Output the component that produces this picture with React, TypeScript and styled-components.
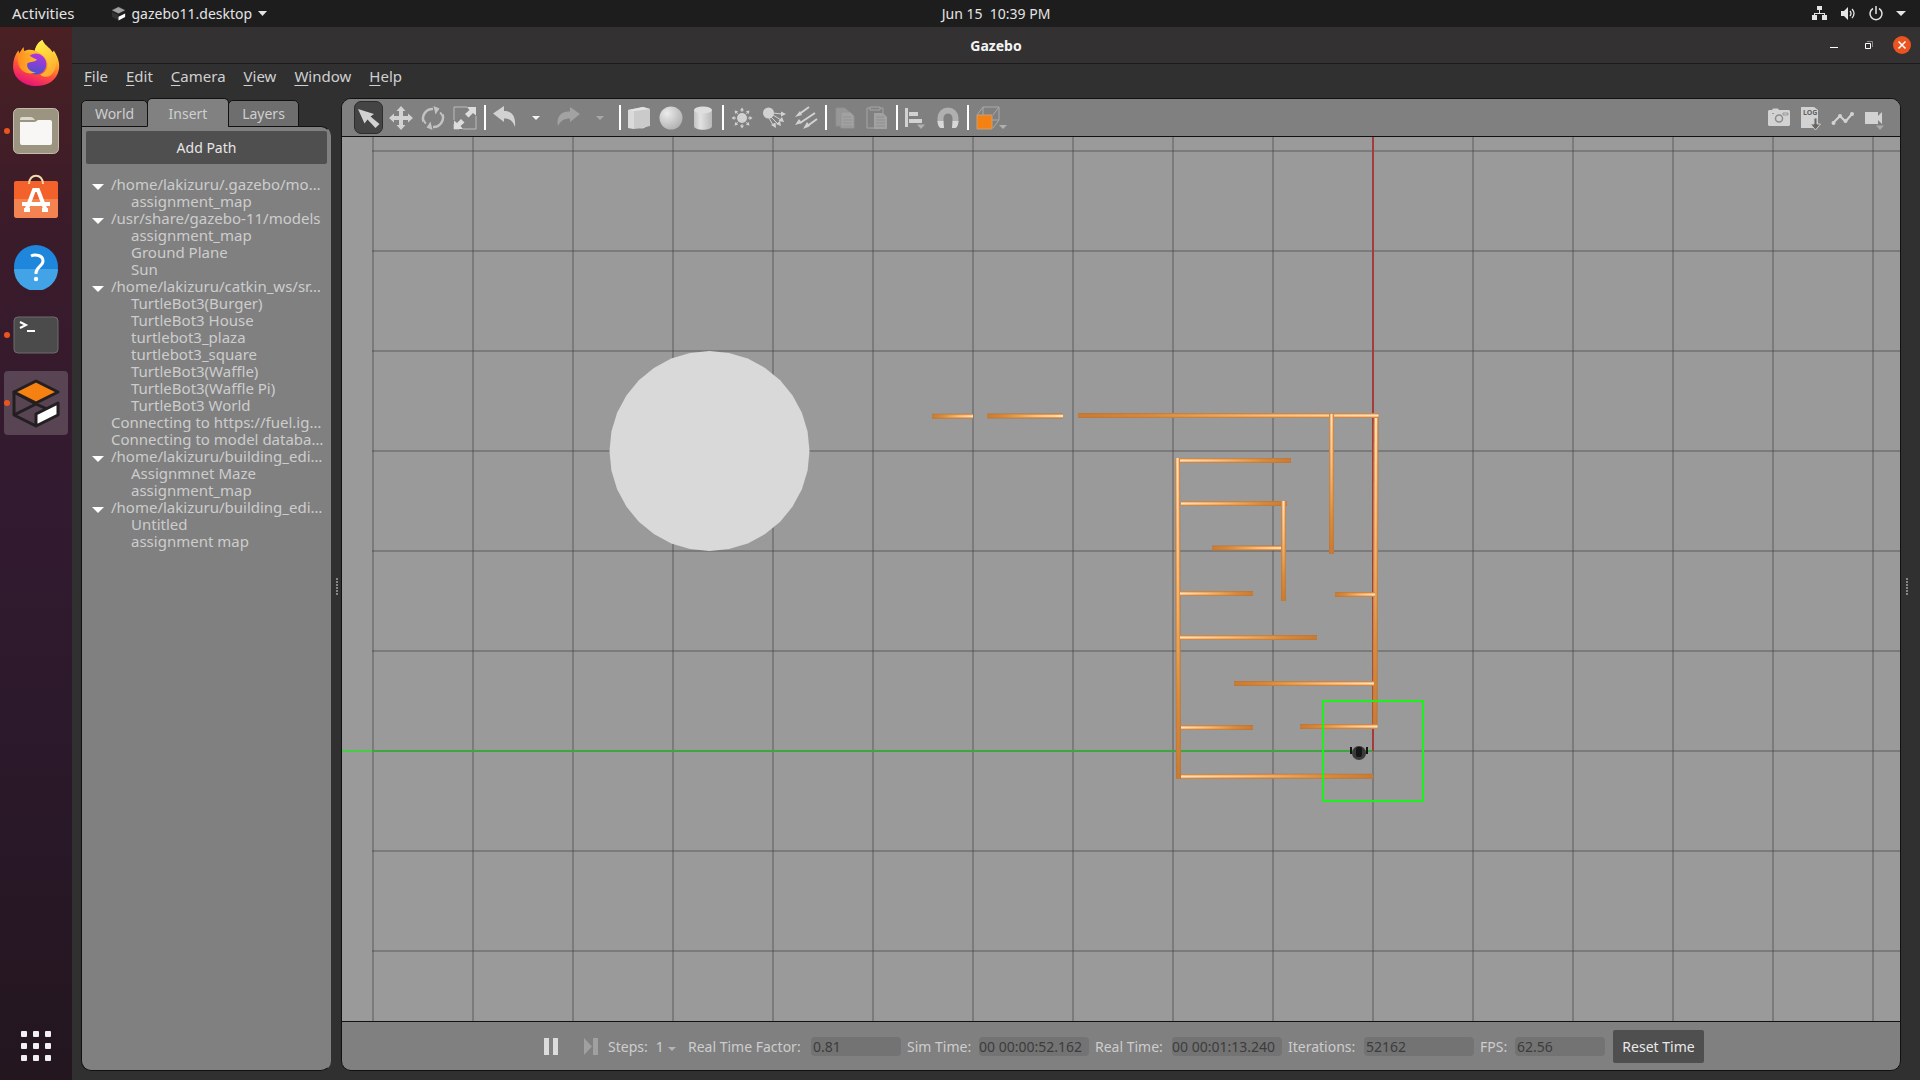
import React from "react";
import styled, { createGlobalStyle, css } from "styled-components";

const GlobalStyle = createGlobalStyle`
  *, *::before, *::after { box-sizing: border-box; }
  body { margin: 0; background: #303030; }
  body, button, input {
    font-family: "Noto Sans", "Open Sans", sans-serif;
    font-size: 14px;
    line-height: 17px;
  }
  button { border: 0; padding: 0; background: none; color: inherit; }
  ul { list-style: none; margin: 0; padding: 0; }
  svg { display: block; }
`;

/* ---------- shell ---------- */

const Desktop = styled.div`
  display: grid;
  grid-template: 27px minmax(0, 1fr) / 72px minmax(0, 1fr);
  height: 100vh;
  overflow: hidden;
`;

const TopBar = styled.header`
  grid-column: 1 / -1;
  display: grid;
  grid-template-columns: 1fr auto 1fr;
  align-items: center;
  padding: 0 14px 0 12px;
  background: #1d1d1d;
  color: #e4e4e4;
`;

const TopGroup = styled.div<{ $end?: boolean }>`
  display: flex;
  align-items: center;
  gap: ${(p) => (p.$end ? 12 : 36)}px;
  justify-content: ${(p) => (p.$end ? "flex-end" : "flex-start")};
`;

const TopButton = styled.button`
  display: flex;
  align-items: center;
  gap: 6px;
`;

const ActivitiesButton = styled(TopButton)`
  font-size: 15px;
`;

const Clock = styled.time`
  padding-left: 74px;
  white-space: pre;
`;

const Dock = styled.nav`
  display: flex;
  flex-direction: column;
  align-items: center;
  gap: 4px;
  padding: 4px 0 2px;
  background: linear-gradient(#4a2023, #3a1b2a 20%, #321a30 45%, #2a1829 72%, #23161f);
`;

const DockItem = styled.button<{ $active?: boolean; $last?: boolean }>`
  display: grid;
  place-items: center;
  flex: none;
  width: 64px;
  height: 64px;
  border-radius: 4px;
  position: relative;
  background: ${(p) => (p.$active ? "#584453" : "transparent")};
  ${(p) => p.$last && css`margin-top: auto;`}
`;

const RunningDot = styled.span`
  position: absolute;
  left: 0;
  top: 29px;
  width: 6px;
  height: 6px;
  border-radius: 50%;
  background: #e95420;
`;

const AppWindow = styled.div`
  display: flex;
  flex-direction: column;
  min-width: 0;
  min-height: 0;
  background: #303030;
`;

const TitleBar = styled.div`
  display: grid;
  grid-template-columns: 1fr auto 1fr;
  align-items: center;
  height: 37px;
  padding: 0 9px;
  border-bottom: 1px solid #1c1c1c;
  background: #343132;
`;

const Title = styled.h1`
  grid-column: 2;
  margin: 0;
  color: #f4f4f4;
  font-size: 14px;
  font-weight: 700;
`;

const WindowButtons = styled.div`
  display: flex;
  justify-content: flex-end;
  gap: 16px;
`;

const WindowButton = styled.button<{ $close?: boolean }>`
  display: grid;
  place-items: center;
  width: 18px;
  height: 18px;
  border-radius: 50%;
  color: #fff;
  background: ${(p) => (p.$close ? "#e95420" : "transparent")};
`;

const MenuBar = styled.nav`
  display: flex;
  gap: 18px;
  padding: 3px 12px 0;
  height: 34px;
  color: #d0d0d0;
`;

const MenuItem = styled.button`
  height: 18px;
  font-size: 15px;
  &::first-letter {
    text-decoration: underline;
    text-underline-offset: 3px;
  }
`;

const Body = styled.div`
  display: flex;
  flex: 1;
  min-height: 0;
  padding: 0 0 9px 9px;
`;

/* ---------- side panel ---------- */

const Side = styled.aside`
  display: flex;
  flex-direction: column;
  width: 250px;
  flex: none;
`;

const Tabs = styled.div`
  display: flex;
  align-items: flex-end;
  height: 29px;
  margin-bottom: -1px;
  z-index: 1;
`;

const Tab = styled.button<{ $width: number; $selected?: boolean }>`
  width: ${(p) => p.$width}px;
  height: ${(p) => (p.$selected ? 29 : 27)}px;
  padding-top: ${(p) => (p.$selected ? 2 : 0)}px;
  border: 1px solid #111;
  border-bottom-color: ${(p) => (p.$selected ? "#818181" : "#111")};
  border-radius: 5px 5px 0 0;
  background: ${(p) => (p.$selected ? "#818181" : "#6e6e6e")};
  color: #cfcfcf;
  & + & { margin-left: -1px; }
`;

const SidePanel = styled.div`
  flex: 1;
  min-height: 0;
  padding: 4px 3px 0 4px;
  border: 1px solid #111;
  border-right-color: #808080;
  border-radius: 0 10px 10px 10px;
  background: #808080;
`;

const AddPath = styled.button`
  width: 100%;
  height: 33px;
  border-radius: 2px;
  background: #4f4f4f;
  color: #e6e6e6;
`;

const Tree = styled.ul`
  padding: 12px 0 0 6px;
  color: #cdcdcd;
  font-size: 15px;
`;

const Branch = styled.li``;

const Row = styled.div`
  display: flex;
  align-items: center;
  gap: 7px;
  height: 17px;
  white-space: nowrap;
`;

const Leaves = styled.ul`
  padding-left: 39px;
`;

const Leaf = styled.li`
  height: 17px;
`;

const Toggle = styled.button`
  width: 12px;
  height: 17px;
  padding-top: 4px;
  display: grid;
  place-items: center;
`;

const Spacer = styled.span`
  width: 12px;
`;

const Splitter = styled.div<{ $width: number }>`
  display: flex;
  flex-direction: column;
  align-items: center;
  justify-content: center;
  gap: 1px;
  width: ${(p) => p.$width}px;
  padding: ${(p) => (p.$width > 12 ? "4px 7px 0 0" : "4px 0 0 2px")};
`;

const Grip = styled.i`
  width: 2px;
  height: 2px;
  background: #858585;
`;

/* ---------- scene ---------- */

const Scene = styled.main`
  display: flex;
  flex-direction: column;
  flex: 1;
  min-width: 0;
  border: 1px solid #111;
  border-radius: 10px;
  overflow: hidden;
  background: #808080;
`;

const ToolBar = styled.div`
  display: flex;
  align-items: center;
  height: 38px;
  flex: none;
  padding: 0 9px 0 11px;
  border-bottom: 1px solid #111;
  background: #808080;
`;

const Tool = styled.button<{ $selected?: boolean; $faded?: boolean; $wide?: boolean }>`
  display: grid;
  place-items: center;
  width: ${(p) => (p.$wide ? 42 : 32)}px;
  height: 34px;
  flex: none;
  color: ${(p) => (p.$faded ? "#a2a2a2" : "#d2d2d2")};
  ${(p) =>
    p.$selected &&
    css`
      width: 29px;
      height: 33px;
      margin: 0 2px 0 1px;
      border: 1px solid #2d2d2d;
      border-radius: 7px;
      background: #444;
    `}
`;

const Divider = styled.span`
  width: 2px;
  height: 25px;
  margin: 0 2px 0 3px;
  background: #fff;
`;

const Stretch = styled.span`
  flex: 1;
`;

const View = styled.div`
  flex: 1;
  min-height: 0;
  background: #9a9a9a;
`;

const Canvas = styled.svg`
  width: 100%;
  height: 100%;
`;

const StatusBar = styled.div`
  display: flex;
  align-items: center;
  justify-content: center;
  gap: 6px;
  height: 49px;
  flex: none;
  border-top: 1px solid #111;
  color: #cdcdcd;
`;

const PlayButton = styled.button<{ $faded?: boolean }>`
  width: ${(p) => (p.$faded ? 32 : 26)}px;
  height: 24px;
  display: flex;
  align-items: center;
  justify-content: ${(p) => (p.$faded ? "flex-end" : "center")};
  padding-right: ${(p) => (p.$faded ? 4 : 0)}px;
  color: ${(p) => (p.$faded ? "#a0a0a0" : "#dcdcdc")};
`;

const StepsButton = styled.button`
  display: flex;
  align-items: center;
  gap: 8px;
  width: 74px;
  svg { margin: 6px 0 0 -4px; }
`;

const Field = styled.label<{ $label: number }>`
  display: grid;
  grid-template-columns: ${(p) => p.$label}px auto;
  align-items: center;
  white-space: nowrap;
`;

const Value = styled.input<{ $wide?: boolean; $flush?: boolean }>`
  width: ${(p) => (p.$wide ? 110 : 90)}px;
  height: 19px;
  border: 0;
  border-radius: 4px;
  padding: 0 ${(p) => (p.$flush ? 0 : 2)}px;
  background: #737373;
  color: #3c3c3c;
`;

const ResetButton = styled.button`
  width: 91px;
  height: 33px;
  margin-left: 2px;
  border-radius: 2px;
  background: #4f4f4f;
  color: #e9e9e9;
`;

/* ---------- icons ---------- */

const Caret = ({ w = 9, h = 5, fill = "currentColor" }) => (
  <svg width={w} height={h} viewBox="0 0 10 5" preserveAspectRatio="none" aria-hidden="true">
    <path d="M0 0h10L5 5z" fill={fill} />
  </svg>
);

const Glyph = ({ children, size = 24 }: { children: React.ReactNode; size?: number }) => (
  <svg width={size} height={size} viewBox={`0 0 ${size} ${size}`} fill="none" aria-hidden="true">
    {children}
  </svg>
);

const c = "currentColor";

const icons = {
  select: <path d="M1 3l16 5-3.500 2.500 9 7.500-4 4-8-8.500-3 4z" fill={c} />,
  move: (
    <path
      d="M12 0l4.500 5H14v5h5V7.500l5 4.500-5 4.500V14h-5v5h2.500L12 24l-4.500-5H10v-5H5v2.500L0 12l5-4.500V10h5V5H7.500z"
      fill={c}
    />
  ),
  rotate: (
    <>
      <path d="M2.500 15.500A9.500 9.500 0 0 1 12 3" stroke="#c0c4c0" strokeWidth="2.500" />
      <path d="M21.500 8.500A9.500 9.500 0 0 1 12 21" stroke="#c0c4c0" strokeWidth="2.500" />
      <path d="M19 6.500q1.500 1 2 3M5 17.500q-1.500-1-2-3" stroke="#c0c4c0" strokeWidth="2" />
      <path d="M12.500 0l6 2.500-4 6zM11.500 24l-6-2.500 4-6z" fill="#c0c4c0" />
    </>
  ),
  scale: (
    <>
      <path d="M1 14V1h13M23 10v13H10M1 18v5h5" stroke="#bcbcbc" />
      <path d="M23 1v8.500l-3-2.500-4.500 4.500-3.500-3.500L16.500 4 14 1zM1 23v-8.500l3 2.500 4-4 3.500 3.500L7.500 20l2.500 3z" fill="#dcdedc" />
    </>
  ),
  undo: <path d="M1 7.500L12 0v5c8 0 12 5 11 16-2-6-5-8.500-11-8.500V16z" fill={c} />,
  redo: <path d="M24 8L14 1v4.500C5 5 0 11 2 20c2-5 6-7.500 12-7.500V16z" fill={c} />,
  box: (
    <>
      <path d="M1 4l15-3 7 2v16l-7 3.500L1 22z" fill="#d2d2d2" />
      <path d="M1 4l6 1v18l-6-1z" fill="#dadada" />
      <path d="M7 5l16-2v17L7 23z" fill="#cacaca" />
      <path d="M1 4l15-3 7 2L7 5z" fill="#e4e4e4" />
    </>
  ),
  sphere: (
    <>
      <defs>
        <radialGradient id="ball" cx=".33" cy=".3" r=".75">
          <stop stopColor="#ececec" />
          <stop offset=".5" stopColor="#cecece" />
          <stop offset="1" stopColor="#b2b2b2" />
        </radialGradient>
      </defs>
      <circle cx="12" cy="12" r="11.500" fill="url(#ball)" />
    </>
  ),
  cylinder: (
    <>
      <defs>
        <linearGradient id="tube">
          <stop stopColor="#c2c2c2" />
          <stop offset=".35" stopColor="#e2e2e2" />
          <stop offset="1" stopColor="#b8b8b8" />
        </linearGradient>
      </defs>
      <path d="M3 4v16c0 5 18 5 18 0V4z" fill="url(#tube)" />
      <ellipse cx="12" cy="4" rx="9" ry="3.500" fill="#dedede" />
    </>
  ),
  point: (
    <>
      <circle cx="12" cy="12" r="5" fill={c} />
      {[0, 45, 90, 135, 180, 225, 270, 315].map((a) => (
        <g key={a} transform={`rotate(${a} 12 12)`}>
          <path d="M12 1.500l2 3h-4z" fill={c} />
          <path d="M12 4v2" stroke={c} />
        </g>
      ))}
    </>
  ),
  spot: (
    <>
      <circle cx="6.500" cy="7" r="5.500" fill={c} />
      <path d="M11 7l9 1M11 9l8 5M9 11l7 7M7 12l4 7" stroke={c} />
      <path d="M19 5.500l5 2.500-5 2.500zM20 11l2 5-5.500-1zM18 15l1 5-5-2zM9 19l4.500-2.500.5 5.500z" fill={c} />
    </>
  ),
  directional: (
    <>
      <path d="M15 1L4 9M21 7L6 17M23 13l-11 8" stroke={c} strokeWidth="2" />
      <path d="M6 5l2 4-7 2zM5 13l3 4-7 2zM13 16l3 4-7 3z" fill={c} />
    </>
  ),
  copy: (
    <>
      <path d="M3 2h9l4 4v14H3z" fill="#979797" stroke="#8f8f8f" />
      <path d="M8 6h9l4 4v12H8z" fill="#a2a2a2" stroke="#929292" />
      <path d="M10 11h8M10 14h9M10 17h9M10 20h9" stroke="#929292" />
    </>
  ),
  paste: (
    <>
      <path d="M5 2H2v20h7M15 2h3v5" stroke="#a5a5a5" />
      <path d="M5 1h10v3H5z" stroke="#a5a5a5" />
      <path d="M9 7h9l4 4v12H9z" fill="#a2a2a2" />
      <path d="M11 11h8M11 14h9M11 17h9M11 20h9" stroke="#8f8f8f" />
    </>
  ),
  align: (
    <>
      <path d="M1 2h3v19H1zM5 6h9v4H5zM5 13h13v4H5z" fill={c} />
      <path d="M13 18.500h8L17 23z" fill="#b0b0b0" />
    </>
  ),
  magnet: (
    <>
      <path d="M4.500 16v-4a7.500 7.500 0 0 1 15 0v4" stroke="#b0b0b0" strokeWidth="6" />
      <path d="M1.500 15h6l.5 7H4.500c-2-1-3-4-3-7zM22.500 15h-6l-.5 7h3.500c2-1 3-4 3-7z" fill="#d8d8d8" />
    </>
  ),
  camera: (
    <>
      <path d="M2 4h3l1-1.500h5L12 4h10l1 1v14l-1 1H2l-1-1V5z" fill={c} />
      <circle cx="12" cy="12.500" r="3.500" stroke="#8c8c8c" strokeWidth="1.500" />
      <path d="M16 7h5v2h-5zM5 7.500h2" stroke="#999" />
    </>
  ),
  log: (
    <>
      <path d="M2 1h13l4 3v18H2z" fill={c} />
      <text x="4" y="9" fontSize="7" fontWeight="700" fontFamily="Noto Sans, sans-serif" fill="#626262">LOG</text>
      <path d="M15 12h3v6h3.500L16.500 24l-5-6H15z" fill="#666" stroke="#ccc" />
    </>
  ),
  plot: (
    <>
      <path d="M2 17l7-7 5.500 5.500L21 8" stroke={c} strokeWidth="2" />
      <circle cx="2.500" cy="17" r="2" fill={c} />
      <circle cx="9" cy="10" r="2" fill={c} />
      <circle cx="14.500" cy="15" r="2" fill={c} />
      <circle cx="21" cy="8" r="2" fill={c} />
    </>
  ),
  video: (
    <>
      <path d="M2 6h13v12H2zM15 10l4-4v12l-4-4z" fill={c} />
      <path d="M13 19.500h8L17 24z" fill="#aaa" />
    </>
  ),
};

const ViewAngleIcon = () => (
  <svg width="32" height="24" viewBox="0 0 32 24" fill="none" aria-hidden="true">
    <path d="M1 9l6-8h16v13l-6 8M7 1v13h16M7 14l-6 8M17 9l6-8" stroke="#a9a9a9" />
    <path d="M1 9h15v14H1z" fill="#f58113" stroke="#c9a074" />
    <path d="M23 19h8l-4 4z" fill="#b0b0b0" />
  </svg>
);

const Firefox = () => (
  <svg width="48" height="46" viewBox="0 1 46 44" aria-hidden="true">
    <defs>
      <linearGradient id="ffBody" x1=".75" y1="0" x2=".35" y2="1">
        <stop stopColor="#fff44f" />
        <stop offset=".35" stopColor="#ffb52a" />
        <stop offset=".65" stopColor="#ff5538" />
        <stop offset="1" stopColor="#e8107c" />
      </linearGradient>
      <linearGradient id="ffGlobe" x1=".6" y1="0" x2=".4" y2="1">
        <stop stopColor="#b833e1" />
        <stop offset="1" stopColor="#4a52c8" />
      </linearGradient>
      <linearGradient id="ffHead">
        <stop stopColor="#ff8a1c" />
        <stop offset="1" stopColor="#ffbd2e" />
      </linearGradient>
      <linearGradient id="ffTail" x1=".3" y1="0" x2=".7" y2="1">
        <stop stopColor="#fff04a" />
        <stop offset="1" stopColor="#ffa62c" />
      </linearGradient>
    </defs>
    <path d="M29 1c2 5 7 7 10 12l1-2c4 6 6 12 5 18-2 11-11 16-22 16S1 38 1 26c0-6 2-11 5-15l1 3 4-6v4c3-2 7-2 11-1 1-4 3-8 7-10z" fill="url(#ffBody)" />
    <circle cx="23" cy="24" r="10" fill="url(#ffGlobe)" />
    <path d="M29 1c2 5 7 7 10 12 5 8 4 16-1 21-3 3-8 3-11 0 7-2 9-10 5-16-2-3-6-5-10-7 1-4 3-8 7-10z" fill="url(#ffTail)" />
    <path d="M6 11l1 3 4-6 1 6c4 1 7 4 12 6-2 2-6 2-9 3-2 4 2 9 8 9-8 3-15-1-17-8-1-5-1-9 0-13z" fill="url(#ffHead)" />
  </svg>
);

const Files = () => (
  <svg width="46" height="46" viewBox="0 0 46 46" aria-hidden="true">
    <rect x=".5" y=".5" width="45" height="45" rx="5" fill="#9b9480" stroke="#c3bdab" />
    <path d="M7 12V11q0-2 2-2h9q2 0 4 3z" fill="#dcd8cc" />
    <path d="M7 14h14q2 0 4-2h12q2 0 2 2v21q0 2-2 2H9q-2 0-2-2z" fill="#f8f7f5" />
  </svg>
);

const Software = () => (
  <svg width="46" height="50" viewBox="0 0 46 50" aria-hidden="true">
    <path d="M1 9q0-2 2-2h40q2 0 2 2v32q0 3-3 3H4q-3 0-3-3z" fill="#f2622a" />
    <path d="M1 25h44v16q0 3-3 3H4q-3 0-3-3z" fill="#f38350" />
    <path d="M16 10C16-1 30-1 30 10" fill="none" stroke="#f5d9a8" strokeWidth="2" />
    <path d="M11 36h6M29 36h6M13 37l8-21h4l8 21" fill="none" stroke="#fff" strokeWidth="4" />
    <path d="M9 28h28v4H9z" fill="#fff" />
  </svg>
);

const Help = () => (
  <svg width="46" height="46" viewBox="0 0 46 46" aria-hidden="true">
    <circle cx="23" cy="23" r="22" fill="#1e87dc" />
    <path d="M1 25h44a22 22 0 0 1-44 0z" fill="#42a3e6" />
    <path d="M18 12c4-2 12-1 12 5 0 5-7 6-7 12v1" fill="none" stroke="#fff" strokeWidth="3" />
    <circle cx="23" cy="35" r="2.200" fill="#fff" />
  </svg>
);

const Terminal = () => (
  <svg width="46" height="38" viewBox="0 0 46 38" aria-hidden="true">
    <rect x="1" y="1" width="44" height="36" rx="4" fill="#4b4b4b" stroke="#6d6d6d" />
    <path d="M7 6l6 3-6 3M14 15h8" fill="none" stroke="#fff" strokeWidth="2" />
  </svg>
);

const Gazebo = ({ size = 50, mono = false }) => (
  <svg width={size} height={size} viewBox="0 0 50 50" aria-hidden="true">
    {!mono && <path d="M25 26L3 14v23l22 11M25 26L3 37M25 26l22 10" fill="none" stroke="#231f20" strokeWidth="3" strokeLinejoin="round" />}
    <path d="M25 3l22 11-22 11L3 14z" fill={mono ? "#a0a0a0" : "#f58113"} stroke={mono ? "#666" : "#231f20"} strokeWidth={mono ? 1 : 3} strokeLinejoin="round" />
    {mono && <path d="M3 19l21 11v17L3 36z" fill="#333" />}
    <path d="M25 36l22-11v12L25 48z" fill="#fff" stroke={mono ? "none" : "#231f20"} strokeWidth="3" strokeLinejoin="round" />
  </svg>
);

const AppGrid = () => (
  <svg width="30" height="30" viewBox="0 0 30 30" fill="#f2f0f2" aria-hidden="true">
    {[0, 12, 24].map((y) => [0, 12, 24].map((x) => <rect key={`${x}-${y}`} x={x} y={y} width="6" height="6" rx="1" />))}
  </svg>
);

/* ---------- data ---------- */

const dock = [
  { name: "Firefox", icon: <Firefox /> },
  { name: "Files", icon: <Files />, running: true },
  { name: "Software", icon: <Software /> },
  { name: "Help", icon: <Help /> },
  { name: "Terminal", icon: <Terminal />, running: true },
  { name: "Gazebo", icon: <Gazebo />, running: true, active: true },
];

const tree: { label: string; items?: string[] }[] = [
  { label: "/home/lakizuru/.gazebo/mo…", items: ["assignment_map"] },
  { label: "/usr/share/gazebo-11/models", items: ["assignment_map", "Ground Plane", "Sun"] },
  {
    label: "/home/lakizuru/catkin_ws/sr…",
    items: [
      "TurtleBot3(Burger)",
      "TurtleBot3 House",
      "turtlebot3_plaza",
      "turtlebot3_square",
      "TurtleBot3(Waffle)",
      "TurtleBot3(Waffle Pi)",
      "TurtleBot3 World",
    ],
  },
  { label: "Connecting to https://fuel.ig…" },
  { label: "Connecting to model databa…" },
  { label: "/home/lakizuru/building_edi…", items: ["Assignmnet Maze", "assignment_map"] },
  { label: "/home/lakizuru/building_edi…", items: ["Untitled", "assignment map"] },
];

type ToolDef = { name: string; icon?: React.ReactNode; selected?: boolean; faded?: boolean };

const toolGroups: ToolDef[][] = [
  [
    { name: "Select", icon: icons.select, selected: true },
    { name: "Translate", icon: icons.move },
    { name: "Rotate", icon: icons.rotate },
    { name: "Scale", icon: icons.scale },
  ],
  [
    { name: "Undo", icon: icons.undo },
    { name: "Undo history" },
    { name: "Redo", icon: icons.redo, faded: true },
    { name: "Redo history", faded: true },
  ],
  [
    { name: "Box", icon: icons.box },
    { name: "Sphere", icon: icons.sphere },
    { name: "Cylinder", icon: icons.cylinder },
  ],
  [
    { name: "Point light", icon: icons.point },
    { name: "Spot light", icon: icons.spot },
    { name: "Directional light", icon: icons.directional },
  ],
  [
    { name: "Copy", icon: icons.copy },
    { name: "Paste", icon: icons.paste },
  ],
  [
    { name: "Align", icon: icons.align },
    { name: "Snap", icon: icons.magnet },
  ],
];

const captureTools: ToolDef[] = [
  { name: "Screenshot", icon: icons.camera },
  { name: "Log", icon: icons.log },
  { name: "Plot", icon: icons.plot },
  { name: "Record video", icon: icons.video },
];

/* Walls run from their lit end to their shaded end, in scene coordinates. */
const walls: [number, number, number, number][] = [
  [1177.5, 458, 1178.5, 779],
  [1376, 413.5, 1375, 728],
  [973, 416.3, 932, 416.3],
  [1063, 416, 987, 416],
  [1378.5, 415.5, 1078, 415.5],
  [1331.5, 414, 1331.5, 554],
  [1180, 460.5, 1291, 460.5],
  [1181, 503.5, 1287, 503.5],
  [1285, 548, 1212, 548],
  [1283.5, 501, 1283.5, 601],
  [1180, 593.5, 1253, 593.5],
  [1375, 594.5, 1335, 594.5],
  [1180, 637.5, 1317, 637.5],
  [1374, 683.5, 1234, 683.5],
  [1181, 727.5, 1253, 727.5],
  [1377.5, 726.5, 1300, 726.5],
  [1181, 776.5, 1373, 776.2],
];

const range = (from: number, to: number) =>
  Array.from({ length: (to - from) / 100 + 1 }, (_, i) => from + i * 100);

const disc = Array.from({ length: 32 }, (_, i) => {
  const a = (i * Math.PI) / 16;
  return `${(709.5 + 100 * Math.cos(a)).toFixed(1)},${(451 + 100 * Math.sin(a)).toFixed(1)}`;
}).join(" ");

const World = () => (
  <Canvas viewBox="342 137 1558 884" preserveAspectRatio="xMidYMid slice" role="img" aria-label="Maze world seen from above">
    <g stroke="#3c3c3c" strokeOpacity=".32" strokeWidth="2">
      {range(373, 1873).map((x) => <path key={x} d={`M${x} 137V1021`} />)}
      {range(151, 951).map((y) => <path key={y} d={`M372 ${y}H1900`} />)}
    </g>
    <path d="M372 751H1373" stroke="#3fa63f" strokeWidth="2" />
    <path d="M342 751H372" stroke="#44cc44" strokeWidth="2" />
    <path d="M1373 137V751" stroke="#a33c3c" strokeWidth="2" />
    <polygon points={disc} fill="#d9d9d9" />
    {walls.map(([x1, y1, x2, y2], i) => (
      <g key={i}>
        <linearGradient id={`wall${i}`} gradientUnits="userSpaceOnUse" x1={x1} y1={y1} x2={x2} y2={y2}>
          <stop stopColor="#e89a52" />
          <stop offset=".6" stopColor="#d98f42" />
          <stop offset="1" stopColor="#c87630" />
        </linearGradient>
        <linearGradient id={`shine${i}`} gradientUnits="userSpaceOnUse" x1={x1} y1={y1} x2={x2} y2={y2}>
          <stop stopColor="#ffe2bd" />
          <stop offset=".35" stopColor="#f8bf85" />
          <stop offset=".75" stopColor="#d88c3e" />
          <stop offset="1" stopColor="#c97c34" />
        </linearGradient>
        <path d={`M${x1} ${y1}L${x2} ${y2}`} stroke="#b4783f" strokeWidth="5" />
        <path d={`M${x1} ${y1}L${x2} ${y2}`} stroke={`url(#wall${i})`} strokeWidth="4" />
        <path d={`M${x1} ${y1}L${x2} ${y2}`} stroke={`url(#shine${i})`} strokeWidth="2" />
      </g>
    ))}
    <g fill="#3a3a3a">
      <circle cx="1359" cy="753" r="7" />
      <path d="M1350 747h2v7h-2zM1366 747h2v7h-2z" fill="#151515" />
      <rect x="1356" y="747" width="6" height="10" rx="2" fill="#161616" />
    </g>
    <rect x="1323" y="701" width="100" height="100" fill="none" stroke="#1df01d" strokeWidth="2" />
  </Canvas>
);

const ToolSet = ({ tools }: { tools: ToolDef[] }) => (
  <>
    {tools.map((t) => (
      <Tool key={t.name} aria-label={t.name} $selected={t.selected} $faded={t.faded}>
        {t.icon ? <Glyph>{t.icon}</Glyph> : <Caret w={8} h={4} fill={t.faded ? "#a8a8a8" : "#f4f4f4"} />}
      </Tool>
    ))}
  </>
);

const Handle = ({ width }: { width: number }) => (
  <Splitter $width={width}>
    {[0, 1, 2, 3, 4, 5].map((i) => <Grip key={i} />)}
  </Splitter>
);

const fields = [
  { label: "Real Time Factor:", value: "0.81", width: 123 },
  { label: "Sim Time:", value: "00 00:00:52.162", width: 72, wide: true, flush: true },
  { label: "Real Time:", value: "00 00:01:13.240", width: 77, wide: true, flush: true },
  { label: "Iterations:", value: "52162", width: 76, wide: true },
  { label: "FPS:", value: "62.56", width: 35 },
];

export default function App() {
  return (
    <>
      <GlobalStyle />
      <Desktop>
        <TopBar>
          <TopGroup>
            <ActivitiesButton>Activities</ActivitiesButton>
            <TopButton>
              <Gazebo size={15} mono />
              gazebo11.desktop
              <Caret />
            </TopButton>
          </TopGroup>
          <Clock>{"Jun 15  10:39 PM"}</Clock>
          <TopGroup $end>
            <Glyph size={16}>
              <path d="M5 0h5v4H5zM0 9h5v5H0zM10 9h5v5h-5zM7 4h1v3h5v2h-1V8H3v1H2V7h5z" fill={c} />
            </Glyph>
            <Glyph size={16}>
              <path d="M1 5h3l4-4v13l-4-4H1z" fill={c} />
              <path d="M10 5q2 2.500 0 5M12 3q4 4.500 0 9" stroke={c} strokeWidth="1.300" />
            </Glyph>
            <Glyph size={16}>
              <path d="M5 2.500a6 6 0 1 0 6 0M8 0v8" stroke={c} strokeWidth="1.500" />
            </Glyph>
            <Caret w={10} />
          </TopGroup>
        </TopBar>

        <Dock aria-label="Dock">
          {dock.map((d) => (
            <DockItem key={d.name} aria-label={d.name} $active={d.active}>
              {d.icon}
              {d.running && <RunningDot />}
            </DockItem>
          ))}
          <DockItem aria-label="Show applications" $last>
            <AppGrid />
          </DockItem>
        </Dock>

        <AppWindow>
          <TitleBar>
            <Title>Gazebo</Title>
            <WindowButtons>
              <WindowButton aria-label="Minimize">
                <Glyph size={18}><path d="M5 11.500h8" stroke={c} /></Glyph>
              </WindowButton>
              <WindowButton aria-label="Restore">
                <Glyph size={18}>
                  <path d="M6.500 7.500h5v5h-5z" stroke={c} />
                  <path d="M8 5.500h5.500V11" stroke="#8a8a8a" />
                </Glyph>
              </WindowButton>
              <WindowButton aria-label="Close" $close>
                <Glyph size={18}><path d="M5.500 5.500l7 7M12.500 5.500l-7 7" stroke={c} strokeWidth="1.500" /></Glyph>
              </WindowButton>
            </WindowButtons>
          </TitleBar>

          <MenuBar>
            {["File", "Edit", "Camera", "View", "Window", "Help"].map((m) => (
              <MenuItem key={m}>{m}</MenuItem>
            ))}
          </MenuBar>

          <Body>
            <Side>
              <Tabs>
                <Tab $width={67}>World</Tab>
                <Tab $width={82} $selected>Insert</Tab>
                <Tab $width={71}>Layers</Tab>
              </Tabs>
              <SidePanel>
                <AddPath>Add Path</AddPath>
                <Tree>
                  {tree.map((b, i) => (
                    <Branch key={i}>
                      <Row>
                        {b.items ? (
                          <Toggle aria-label={`Collapse ${b.label}`}><Caret w={12} h={6} fill="#fff" /></Toggle>
                        ) : (
                          <Spacer />
                        )}
                        {b.label}
                      </Row>
                      {b.items && (
                        <Leaves>
                          {b.items.map((l) => <Leaf key={l}>{l}</Leaf>)}
                        </Leaves>
                      )}
                    </Branch>
                  ))}
                </Tree>
              </SidePanel>
            </Side>

            <Handle width={10} />

            <Scene>
              <ToolBar>
                {toolGroups.map((g, i) => (
                  <React.Fragment key={i}>
                    <ToolSet tools={g} />
                    <Divider />
                  </React.Fragment>
                ))}
                <Tool aria-label="View angle" $wide><ViewAngleIcon /></Tool>
                <Stretch />
                <ToolSet tools={captureTools} />
              </ToolBar>
              <View><World /></View>
              <StatusBar>
                <PlayButton aria-label="Pause">
                  <svg width="14" height="17" viewBox="0 0 14 17" fill={c}><path d="M0 0h5v17H0zM9 0h5v17H9z" /></svg>
                </PlayButton>
                <PlayButton aria-label="Step" $faded>
                  <svg width="14" height="17" viewBox="0 0 14 17" fill={c}><path d="M0 0l8 8.500L0 17zM9 0h5v17H9z" /></svg>
                </PlayButton>
                <StepsButton>
                  <span>Steps:</span>
                  <span>1</span>
                  <Caret w={8} h={4} fill="#b4b4b4" />
                </StepsButton>
                {fields.map((f) => (
                  <Field key={f.label} $label={f.width}>
                    <span>{f.label}</span>
                    <Value readOnly defaultValue={f.value} $wide={f.wide} $flush={f.flush} />
                  </Field>
                ))}
                <ResetButton>Reset Time</ResetButton>
              </StatusBar>
            </Scene>

            <Handle width={19} />
          </Body>
        </AppWindow>
      </Desktop>
    </>
  );
}
